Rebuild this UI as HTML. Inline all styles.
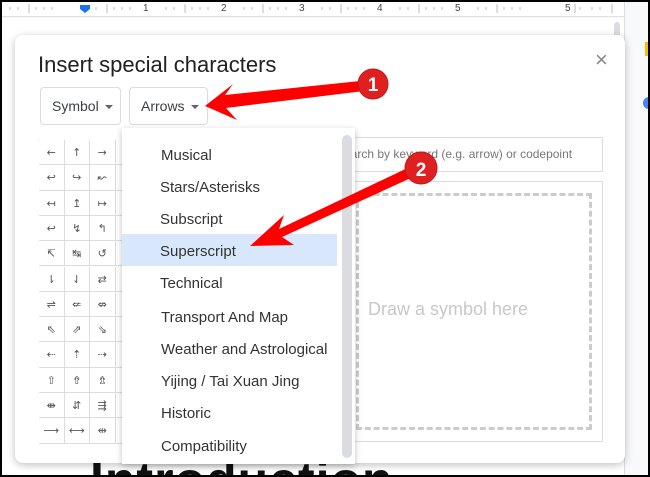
<!DOCTYPE html>
<html style="width:650px;height:477px;overflow:hidden"><head><style>
*{margin:0;padding:0;box-sizing:border-box}
body{width:650px;height:477px;overflow:hidden;background:#f8f9fa;font-family:"Liberation Sans",Arial,sans-serif;position:relative}
.abs{position:absolute}
.ruler{left:0;top:0;width:624px;height:17px;background:#fff;border-bottom:1px solid #e0e0e0;font-size:10px;color:#444}
.doc{left:0;top:18px;width:624px;height:459px;background:#fff;overflow:hidden}
.dlg{left:15px;top:35px;width:610px;height:428px;background:#fff;border-radius:8px;box-shadow:0 2px 8px rgba(0,0,0,.25)}
.btn{border:1px solid #dadce0;border-radius:4px;font-size:14px;color:#3c4043;height:38px;line-height:36px;padding-left:11px;background:#fff}
.caret{display:inline-block;border-left:4px solid transparent;border-right:4px solid transparent;border-top:4px solid #5f6368;vertical-align:middle;margin-left:6px}
.grid{left:38px;top:139px;border-left:1px solid #dadce0;border-top:1px solid #dadce0}
.grid div{position:absolute;width:25.5px;height:25.3px;border-right:1px solid #dadce0;border-bottom:1px solid #dadce0;font-size:11px;color:#555;text-align:center;line-height:25px;font-family:"DejaVu Sans",sans-serif}
.menu{left:122px;top:128px;width:233px;height:336px;background:#fff;box-shadow:0 2px 6px rgba(0,0,0,.25)}
.menu p{position:absolute;left:39px;font-size:15px;color:#333}
</style></head><body>
<div class="abs ruler">
<span class="abs" style="left:143px;top:3px">1</span><span class="abs" style="left:221px;top:3px">2</span><span class="abs" style="left:299px;top:3px">3</span><span class="abs" style="left:377px;top:3px">4</span><span class="abs" style="left:455px;top:3px">5</span><span class="abs" style="left:565px;top:3px">5</span>
<svg class="abs" style="left:0;top:0" width="624" height="17"><g stroke="#bbb"><path d="M10 7v3M18 7v3M36 7v3M44 7v3M52 7v3M88 7v3M96 7v3M114 7v3M122 7v3M130 7v3M166 7v3M174 7v3M192 7v3M200 7v3M208 7v3M244 7v3M252 7v3M270 7v3M278 7v3M286 7v3M322 7v3M330 7v3M348 7v3M356 7v3M364 7v3M400 7v3M408 7v3M426 7v3M434 7v3M442 7v3M478 7v3M486 7v3M504 7v3M512 7v3M520 7v3M592 7v3M600 7v3M580 7v3"/><path d="M29 4v9M107 4v9M185 4v9M263 4v9M341 4v9M419 4v9M497 4v9M575 4v9M612 4v9"/></g><path d="M80 5h10v4l-5 4l-5-4z" fill="#1a73e8"/></svg>
</div>
<div class="abs doc"><div class="abs" style="left:90px;top:434px;font-size:50px;line-height:56px;font-weight:bold;color:#111;letter-spacing:1px;white-space:nowrap">Introduction</div></div>
<div class="abs" style="left:614px;top:22px;width:6px;height:30px;background:#dadce0;border-radius:3px"></div>
<div class="abs" style="left:624px;top:0;width:1px;height:477px;background:#ddd"></div>
<div class="abs" style="left:645px;top:42px;width:5px;height:14px;background:#fbbc04"></div>
<div class="abs" style="left:643px;top:97px;width:7px;height:12px;border-radius:6px 0 0 6px;background:#4285f4"></div>
<div class="abs dlg">
<div class="abs" style="left:23px;top:17px;font-size:22px;color:#202124">Insert special characters</div>
<div class="abs" style="left:580px;top:12px;font-size:22px;color:#888">×</div>
<div class="abs btn" style="left:25px;top:52px;width:81px">Symbol<span class="caret"></span></div>
<div class="abs btn" style="left:114px;top:52px;width:79px">Arrows<span class="caret"></span></div>
<div class="abs" style="left:310px;top:102px;width:278px;height:35px;border:1px solid #dadce0;font-size:12px;color:#777;line-height:33px;padding-left:10px">Search by keyword (e.g. arrow) or codepoint</div>
<div class="abs" style="left:310px;top:146px;width:278px;height:261px;border:1px solid #dadce0"></div>
<div class="abs" style="left:341px;top:158px;width:236px;height:237px;border:3px dashed #ccc"></div>
<div class="abs" style="left:353px;top:264px;font-size:18px;color:#c8c8c8">Draw a symbol here</div>
</div>
<div class="abs grid" id="g">
<div style="left:0;top:0">←</div><div style="left:25.5px;top:0">↑</div><div style="left:51px;top:0">→</div><div style="left:76.5px;top:0"></div>
<div style="left:0;top:25.3px">↩</div><div style="left:25.5px;top:25.3px">↪</div><div style="left:51px;top:25.3px">↜</div><div style="left:76.5px;top:25.3px"></div>
<div style="left:0;top:50.6px">↤</div><div style="left:25.5px;top:50.6px">↥</div><div style="left:51px;top:50.6px">↦</div><div style="left:76.5px;top:50.6px"></div>
<div style="left:0;top:75.9px">↩</div><div style="left:25.5px;top:75.9px">↯</div><div style="left:51px;top:75.9px">↰</div><div style="left:76.5px;top:75.9px"></div>
<div style="left:0;top:101.2px">↸</div><div style="left:25.5px;top:101.2px">↹</div><div style="left:51px;top:101.2px">↺</div><div style="left:76.5px;top:101.2px"></div>
<div style="left:0;top:126.5px">⇂</div><div style="left:25.5px;top:126.5px">⇃</div><div style="left:51px;top:126.5px">⇄</div><div style="left:76.5px;top:126.5px"></div>
<div style="left:0;top:151.8px">⇌</div><div style="left:25.5px;top:151.8px">⇍</div><div style="left:51px;top:151.8px">⇎</div><div style="left:76.5px;top:151.8px"></div>
<div style="left:0;top:177.1px">⇖</div><div style="left:25.5px;top:177.1px">⇗</div><div style="left:51px;top:177.1px">⇘</div><div style="left:76.5px;top:177.1px"></div>
<div style="left:0;top:202.4px">⇠</div><div style="left:25.5px;top:202.4px">⇡</div><div style="left:51px;top:202.4px">⇢</div><div style="left:76.5px;top:202.4px"></div>
<div style="left:0;top:227.7px">⇧</div><div style="left:25.5px;top:227.7px">⇮</div><div style="left:51px;top:227.7px">⇯</div><div style="left:76.5px;top:227.7px"></div>
<div style="left:0;top:253px">⇼</div><div style="left:25.5px;top:253px">⇵</div><div style="left:51px;top:253px">⇶</div><div style="left:76.5px;top:253px"></div>
<div style="left:0;top:278.3px">⟶</div><div style="left:25.5px;top:278.3px">⟷</div><div style="left:51px;top:278.3px">⇹</div><div style="left:76.5px;top:278.3px"></div>
</div>
<div class="abs menu">
<div class="abs" style="left:220px;top:7px;width:10px;height:323px;background:#dadce0;border-radius:5px"></div>
<div class="abs" style="left:0;top:106px;width:215px;height:32px;background:#d2e3fc;opacity:.85"></div>
<p style="top:19px">Musical</p>
<p style="top:51px;left:38px">Stars/Asterisks</p>
<p style="top:83px;left:38px">Subscript</p>
<p style="top:115px;left:38px">Superscript</p>
<p style="top:147px;left:38px">Technical</p>
<p style="top:181px">Transport And Map</p>
<p style="top:213px">Weather and Astrological</p>
<p style="top:245px">Yijing / Tai Xuan Jing</p>
<p style="top:277px">Historic</p>
<p style="top:310px">Compatibility</p>
</div>
<svg class="abs" style="left:0;top:0" width="650" height="477">
<path d="M370 80 L225 95 L233 84 L205 106 L237 120 L226 108 L372 90 Z" fill="#f00"/>
<circle cx="373" cy="84" r="15" fill="#e02020" stroke="#c01818"/>
<text x="373" y="91" font-size="19" fill="#fff" text-anchor="middle" font-family="Liberation Sans" font-weight="bold">1</text>
<path d="M418 163 L279 229 L284 215 L250 246 L294 245 L282 237 L424 172 Z" fill="#f00"/>
<circle cx="421" cy="168" r="16" fill="#e02020" stroke="#c01818"/>
<text x="421" y="176" font-size="19" fill="#fff" text-anchor="middle" font-family="Liberation Sans" font-weight="bold">2</text>
</svg>
<div class="abs" style="left:0;top:0;width:650px;height:477px;border:2px solid #000;pointer-events:none"></div>
</body></html>
